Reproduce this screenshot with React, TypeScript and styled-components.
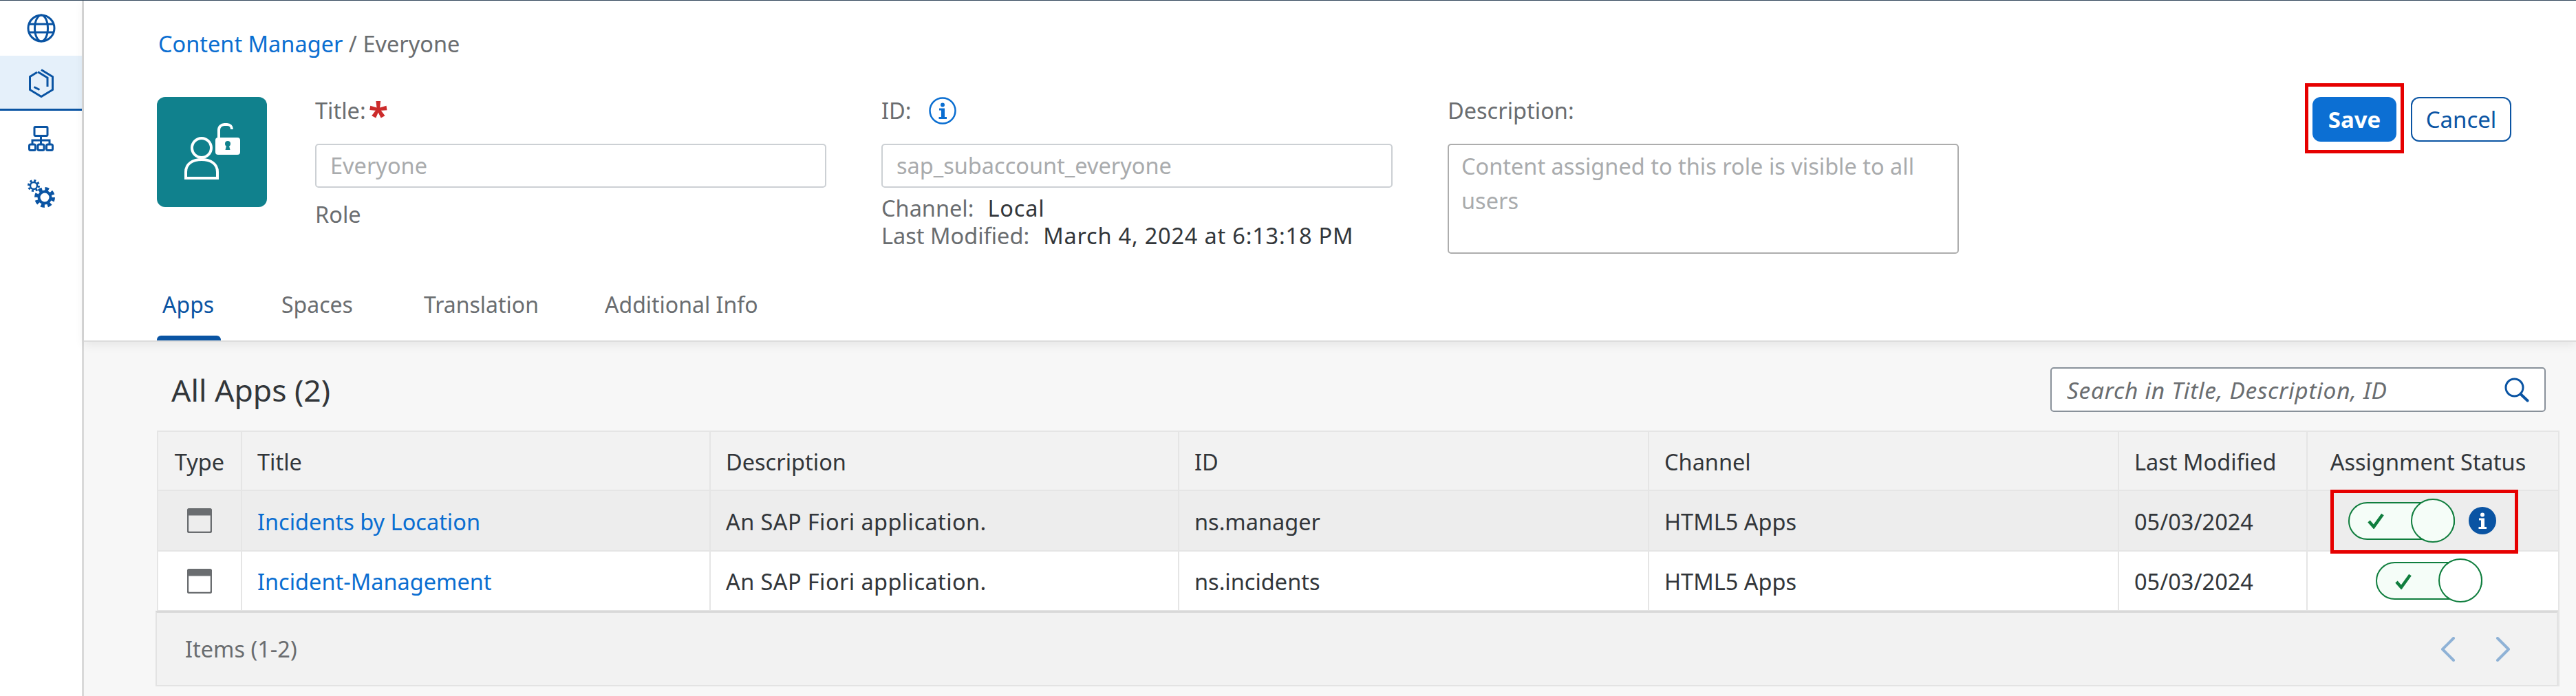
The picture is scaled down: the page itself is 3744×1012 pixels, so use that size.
import React from "react";
import styled, { createGlobalStyle } from "styled-components";

const FONT = `"Noto Sans", "Open Sans", Arial, sans-serif`;
const LINK = "#0a6ed1";
const DARK_BLUE = "#0a54a3";
const TEXT = "#32363a";
const LABEL = "#6a6d70";
const FAINT = "#a9abad";
const LINE = "#e5e5e5";
const RED = "#e60000";
const GREEN = "#107e3e";
const COLUMNS = "122px 681px 681px 683px 683px 274px 1fr";

const Global = createGlobalStyle`
  html, body { margin: 0; padding: 0; background: #f7f7f7; }
  body { font-family: ${FONT}; font-size: 32.5px; color: ${TEXT}; }
  * { box-sizing: border-box; }
`;

const Page = styled.div`
  width: 3744px;
  height: 1012px;
  display: flex;
  overflow: hidden;
  border-top: 1px solid #354a5f;
`;
const Sidebar = styled.nav`
  width: 122px;
  flex: none;
  background: #fff;
  border-right: 3px solid #d9d9d9;
  display: flex;
  flex-direction: column;
`;
const NavItem = styled.div<{ $active?: boolean }>`
  height: 80px;
  padding-top: 3px;
  display: flex;
  align-items: center;
  justify-content: center;
  background: ${(p) => (p.$active ? "#e5f0fa" : "transparent")};
  border-bottom: 3px solid ${(p) => (p.$active ? DARK_BLUE : "transparent")};
  color: ${DARK_BLUE};
`;
const Main = styled.main`
  flex: 1;
  min-width: 0;
  display: flex;
  flex-direction: column;
`;
const Header = styled.header`
  height: 496px;
  flex: none;
  background: #fff;
  padding: 43px 94px 0 106px;
  display: flex;
  flex-direction: column;
  border-bottom: 2px solid #dcdcdc;
  box-shadow: 0 4px 14px rgba(0, 0, 0, 0.08);
  position: relative;
  z-index: 1;
`;
const Crumbs = styled.div`
  height: 40px;
  line-height: 40px;
  padding-left: 2px;
  color: ${LABEL};
  margin-bottom: 57px;
`;
const CrumbLink = styled.span`
  color: ${LINK};
`;
const HeadRow = styled.div`
  display: flex;
  align-items: flex-start;
`;
const Tile = styled.div`
  width: 160px;
  height: 160px;
  flex: none;
  background: #10818d;
  border-radius: 12px;
  display: flex;
  align-items: center;
  justify-content: center;
  color: #fff;
  margin-right: 70px;
`;
const Field = styled.div`
  width: 743px;
  flex: none;
  margin-right: 80px;
`;
const Label = styled.div`
  height: 40px;
  line-height: 40px;
  color: ${LABEL};
  display: flex;
  align-items: center;
  margin-bottom: 28px;
`;
const Required = styled.span`
  color: #cc2b2b;
  font-size: 52px;
  font-weight: 700;
  line-height: 40px;
  margin-left: 4px;
  padding-top: 12px;
`;
const InfoWrap = styled.span`
  display: inline-flex;
  margin-left: 26px;
`;
const Input = styled.div`
  height: 64px;
  line-height: 60px;
  border: 2px solid #ccd0d4;
  border-radius: 5px;
  padding: 0 20px;
  color: ${FAINT};
  background: #fff;
`;
const Area = styled.div`
  height: 160px;
  border: 2px solid #adadad;
  border-radius: 5px;
  padding: 6px 18px;
  line-height: 50px;
  color: ${FAINT};
`;
const Kind = styled.div`
  height: 40px;
  line-height: 40px;
  margin-top: 19px;
  color: ${LABEL};
`;
const MetaList = styled.div`
  margin-top: 10px;
`;
const Meta = styled.div`
  height: 40px;
  line-height: 40px;
  color: ${LABEL};
  display: flex;
  gap: 20px;
`;
const MetaValue = styled.span`
  color: ${TEXT};
  letter-spacing: 0.8px;
`;
const Actions = styled.div`
  margin-left: auto;
  display: flex;
  align-items: flex-start;
  gap: 10px;
`;
const Marked = styled.div`
  border: 5px solid ${RED};
  padding: 15px 6px 12px;
  margin-top: -20px;
`;
const Emph = styled.button`
  width: 122px;
  height: 65px;
  display: block;
  background: #0c6fd3;
  border: 0;
  border-radius: 12px;
  color: #fff;
  font: 700 33px ${FONT};
  padding: 0;
`;
const Ghost = styled.button`
  width: 146px;
  height: 65px;
  background: #fff;
  border: 2px solid ${DARK_BLUE};
  border-radius: 12px;
  color: ${DARK_BLUE};
  font: 400 33px ${FONT};
  padding: 0;
`;
const Tabs = styled.div`
  margin-top: auto;
  display: flex;
  gap: 80px;
`;
const Tab = styled.div<{ $active?: boolean; $w: number }>`
  width: ${(p) => p.$w}px;
  height: 72px;
  padding: 0 8px;
  font-size: 32px;
  line-height: 40px;
  white-space: nowrap;
  color: ${(p) => (p.$active ? DARK_BLUE : LABEL)};
  position: relative;
  &::after {
    content: "";
    display: ${(p) => (p.$active ? "block" : "none")};
    position: absolute;
    left: 0;
    right: 0;
    bottom: 0;
    height: 7px;
    border-radius: 6px 6px 0 0;
    background: ${DARK_BLUE};
  }
`;
const Content = styled.section`
  flex: 1;
  padding: 37px 24px 0 106px;
`;
const TitleBar = styled.div`
  height: 65px;
  display: flex;
  align-items: center;
  justify-content: space-between;
  padding: 0 20px 0 21px;
  margin-bottom: 27px;
`;
const Heading = styled.h2`
  margin: 0;
  font-size: 44.5px;
  font-weight: 400;
  color: ${TEXT};
`;
const Search = styled.div`
  width: 720px;
  height: 65px;
  background: #fff;
  border: 2px solid #89919a;
  border-radius: 5px;
  display: flex;
  align-items: center;
  justify-content: space-between;
  padding: 0 22px;
  font-size: 33.5px;
  letter-spacing: 0.7px;
  font-style: italic;
  color: ${LABEL};
`;
const Grid = styled.div`
  border: solid ${LINE};
  border-width: 2px 2px 0;
`;
const Row = styled.div<{ $h: number; $bg: string }>`
  height: ${(p) => p.$h}px;
  display: grid;
  grid-template-columns: ${COLUMNS};
  background: ${(p) => p.$bg};
  border-bottom: 2px solid ${LINE};
`;
const Cell = styled.div`
  display: flex;
  align-items: center;
  padding: 2px 0 0 22px;
  border-right: 2px solid ${LINE};
  color: ${TEXT};
  &:last-child {
    border-right: 0;
  }
`;
const TypeHead = styled(Cell)`
  padding-left: 0;
  justify-content: center;
`;
const IconCell = styled(TypeHead)`
  padding-top: 0;
`;
const DescCell = styled(Cell)`
  letter-spacing: 0.4px;
`;
const StatusHead = styled(Cell)`
  padding: 2px 14px 0 0;
  justify-content: center;
`;
const StatusCell = styled(Cell)<{ $inset: number }>`
  position: relative;
  padding: 0 0 0 ${(p) => p.$inset}px;
  gap: 20px;
`;
const StatusMark = styled.div`
  position: absolute;
  left: 33px;
  top: -2px;
  width: 273px;
  height: 93px;
  border: 5px solid ${RED};
  z-index: 2;
`;
const TitleLink = styled.span`
  color: ${LINK};
`;
const Track = styled.div`
  width: 155px;
  height: 55px;
  background: #f5fdf8;
  border: 2.5px solid ${GREEN};
  border-radius: 28px;
  position: relative;
  display: flex;
  align-items: center;
  padding-left: 26px;
  color: ${GREEN};
  flex: none;
`;
const Knob = styled.div<{ $bg: string }>`
  position: absolute;
  right: -2px;
  top: -7px;
  width: 64px;
  height: 64px;
  border-radius: 50%;
  border: 2.5px solid ${GREEN};
  background: ${(p) => p.$bg};
`;
const Footer = styled.div`
  height: 110px;
  margin-left: -4px;
  background: #f2f2f2;
  border: solid #e3e3e3;
  border-width: 0 2px 2px;
  border-top: 3px solid #d9d9d9;
  margin-top: -1px;
  display: flex;
  align-items: center;
  justify-content: space-between;
  padding: 0 68px 0 41px;
  color: ${LABEL};
`;
const Pager = styled.div`
  display: flex;
  gap: 60px;
  color: #8fb2d6;
`;

const Globe = () => (
  <svg width="42" height="42" viewBox="0 0 42 42" fill="none" stroke="currentColor" strokeWidth="3">
    <circle cx="21" cy="21" r="19" />
    <ellipse cx="21" cy="21" rx="9.5" ry="19" />
    <path d="M3.5 15h35M3.5 27h35" />
  </svg>
);
const Box = () => (
  <svg width="40" height="42" viewBox="0 0 40 42" fill="none" stroke="currentColor" strokeWidth="3">
    <path d="M14 5 3.5 11.5v19L20 40.500l16.500-10v-19L20 1.500" />
    <path d="M15 4.500 29 13v13M9.500 26.500l8 4" />
  </svg>
);
const Tree = () => (
  <svg width="37" height="37" viewBox="0 0 37 37" fill="none" stroke="currentColor" strokeWidth="3">
    <rect x="9" y="1.500" width="19" height="13" rx="1.500" />
    <path d="M18.500 15v12M6 27v-6h25v6" />
    <rect x="1.500" y="27" width="9" height="8.500" rx="2" />
    <rect x="14" y="27" width="9" height="8.500" rx="2" />
    <rect x="26.500" y="27" width="9" height="8.500" rx="2" />
  </svg>
);
const Gears = () => (
  <svg width="42" height="42" viewBox="0 0 42 42" fill="none" stroke="currentColor">
    <circle cx="10" cy="10" r="5" strokeWidth="2.500" />
    <circle cx="10" cy="10" r="7.500" strokeWidth="3" strokeDasharray="3 2.890" />
    <circle cx="26" cy="27" r="8.500" strokeWidth="4" />
    <circle cx="26" cy="27" r="12.500" strokeWidth="5" strokeDasharray="5.500 4.320" />
  </svg>
);
const RoleIcon = () => (
  <svg width="84" height="84" viewBox="0 0 84 84" fill="none" stroke="currentColor" strokeWidth="4">
    <circle cx="27" cy="36" r="14" />
    <path d="M4 80V71c0-12 10-18 23-18s23 6 23 18v9Z" />
    <path d="M52 22V10c0-5 4-8 8-8h4c4 0 7 3 7 7" />
    <rect x="47" y="21" width="36" height="25" rx="4" fill="currentColor" stroke="none" />
    <circle cx="65" cy="30" r="4" fill="#10818d" stroke="none" />
    <path d="M63.500 31h3l2 8h-7Z" fill="#10818d" stroke="none" />
  </svg>
);
const InfoGlyph = ({ color }: { color: string }) => (
  <path d="M20 8.500a3 3 0 1 1 0 6 3 3 0 0 1 0-6ZM15 16.500h8v12.500h3v3H14.500v-3h3.500v-9.500h-3Z" fill={color} />
);
const InfoOutline = () => (
  <svg width="40" height="40" viewBox="0 0 40 40" fill="none">
    <circle cx="20" cy="20" r="18.500" stroke={LINK} strokeWidth="2.500" />
    <InfoGlyph color={LINK} />
  </svg>
);
const InfoSolid = () => (
  <svg width="40" height="40" viewBox="0 0 40 40" style={{ flex: "none" }}>
    <circle cx="20" cy="20" r="20" fill={DARK_BLUE} />
    <InfoGlyph color="#fff" />
  </svg>
);
const Lens = () => (
  <svg width="36" height="36" viewBox="0 0 36 36" fill="none" stroke={DARK_BLUE} strokeWidth="3">
    <circle cx="14.500" cy="14.500" r="12.500" />
    <path d="M23.500 24 33.500 33.500" strokeWidth="4" strokeLinecap="round" />
  </svg>
);
const WindowIcon = () => (
  <svg width="36" height="36" viewBox="0 0 36 36">
    <rect x="1" y="1" width="34" height="34" rx="2.500" fill="none" stroke="#6a6d70" strokeWidth="2.500" />
    <path d="M1 3.500A2.500 2.500 0 0 1 3.500 1h29A2.500 2.500 0 0 1 35 3.500V10.500H1Z" fill="#6a6d70" />
  </svg>
);
const Tick = () => (
  <svg width="24" height="24" viewBox="0 0 24 24" fill="none" stroke="currentColor" strokeWidth="4.500">
    <path d="M2 13 9 21 22 3" />
  </svg>
);
const Chevron = ({ left }: { left?: boolean }) => (
  <svg width="20" height="36" viewBox="0 0 20 36" fill="none" stroke="currentColor" strokeWidth="4" strokeLinecap="round" strokeLinejoin="round">
    <path d={left ? "M18 2 2 18l16 16" : "M2 2l16 16L2 34"} />
  </svg>
);

const apps = [
  { title: "Incidents by Location", id: "ns.manager", h: 88, bg: "#ededed", knob: "#f5fdf8", inset: 59, marked: true },
  { title: "Incident-Management", id: "ns.incidents", h: 87, bg: "#fff", knob: "#fff", inset: 99, marked: false },
];

export default function App() {
  return (
    <Page>
      <Global />
      <Sidebar>
        <NavItem><Globe /></NavItem>
        <NavItem $active><Box /></NavItem>
        <NavItem><Tree /></NavItem>
        <NavItem><Gears /></NavItem>
      </Sidebar>
      <Main>
        <Header>
          <Crumbs><CrumbLink>Content Manager</CrumbLink> / Everyone</Crumbs>
          <HeadRow>
            <Tile><RoleIcon /></Tile>
            <Field>
              <Label>Title:<Required>*</Required></Label>
              <Input>Everyone</Input>
              <Kind>Role</Kind>
            </Field>
            <Field>
              <Label>ID:<InfoWrap><InfoOutline /></InfoWrap></Label>
              <Input>sap_subaccount_everyone</Input>
              <MetaList>
                <Meta>Channel:<MetaValue>Local</MetaValue></Meta>
                <Meta>Last Modified:<MetaValue>March 4, 2024 at 6:13:18 PM</MetaValue></Meta>
              </MetaList>
            </Field>
            <Field>
              <Label>Description:</Label>
              <Area>Content assigned to this role is visible to all users</Area>
            </Field>
            <Actions>
              <Marked><Emph>Save</Emph></Marked>
              <Ghost>Cancel</Ghost>
            </Actions>
          </HeadRow>
          <Tabs>
            <Tab $active $w={93}>Apps</Tab>
            <Tab $w={127}>Spaces</Tab>
            <Tab $w={183}>Translation</Tab>
            <Tab $w={240}>Additional Info</Tab>
          </Tabs>
        </Header>
        <Content>
          <TitleBar>
            <Heading>All Apps (2)</Heading>
            <Search>Search in Title, Description, ID<Lens /></Search>
          </TitleBar>
          <Grid>
            <Row $h={86} $bg="#f2f2f2">
              <TypeHead>Type</TypeHead>
              <Cell>Title</Cell>
              <Cell>Description</Cell>
              <Cell>ID</Cell>
              <Cell>Channel</Cell>
              <Cell>Last Modified</Cell>
              <StatusHead>Assignment Status</StatusHead>
            </Row>
            {apps.map((a) => (
              <Row key={a.id} $h={a.h} $bg={a.bg}>
                <IconCell><WindowIcon /></IconCell>
                <Cell><TitleLink>{a.title}</TitleLink></Cell>
                <DescCell>An SAP Fiori application.</DescCell>
                <Cell>{a.id}</Cell>
                <Cell>HTML5 Apps</Cell>
                <Cell>05/03/2024</Cell>
                <StatusCell $inset={a.inset}>
                  <Track><Tick /><Knob $bg={a.knob} /></Track>
                  {a.marked && <InfoSolid />}
                  {a.marked && <StatusMark />}
                </StatusCell>
              </Row>
            ))}
            <Footer>
              Items (1-2)
              <Pager><Chevron left /><Chevron /></Pager>
            </Footer>
          </Grid>
        </Content>
      </Main>
    </Page>
  );
}
